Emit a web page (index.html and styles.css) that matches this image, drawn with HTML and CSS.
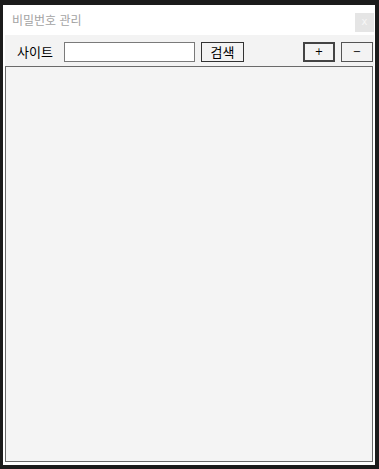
FILE: index.html
```html
<!DOCTYPE html>
<html lang="ko">
<head>
<meta charset="utf-8">
<title>비밀번호 관리</title>
<link rel="stylesheet" href="styles.css">
</head>
<body>
<div class="window">
  <div class="titlebar">
    <span class="title">비밀번호 관리</span>
    <span class="close">x</span>
  </div>
  <div class="content">
    <div class="toolbar">
      <span class="label">사이트</span>
      <input class="search-input" type="text">
      <button class="btn btn-search">검색</button>
      <button class="btn btn-add">+</button>
      <button class="btn btn-remove">−</button>
    </div>
    <div class="listbox"></div>
  </div>
</div>
</body>
</html>
```
FILE: styles.css
```css
html, body {
  margin: 0;
  padding: 0;
  background: #1b1b1b;
  height: 100%;
}
body {
  font-family: "Noto Sans CJK KR", "Noto Sans", sans-serif;
  padding-top: 5px;
  padding-left: 3px;
}
.window {
  width: 372px;
  height: 460px;
  background: #ffffff;
  display: flex;
  flex-direction: column;
}
.titlebar {
  height: 30px;
  display: flex;
  justify-content: space-between;
  align-items: flex-start;
  padding-left: 9px;
  box-sizing: border-box;
}
.title {
  font-size: 12px;
  line-height: 30px;
  color: #a3a3a3;
}
.close {
  margin-top: 8px;
  margin-right: 1px;
  width: 19px;
  height: 19px;
  background: #e5e5e5;
  color: #f7f7f7;
  font-family: "DejaVu Sans", sans-serif;
  font-size: 10px;
  line-height: 18px;
  text-align: center;
}
.content {
  padding-left: 2px;
  padding-right: 1px;
  display: flex;
  flex-direction: column;
}
.toolbar {
  height: 31px;
  background: #f3f3f3;
  display: flex;
  align-items: flex-start;
  padding-top: 7px;
  box-sizing: border-box;
}
.label {
  margin-left: 12px;
  width: 47px;
  font-size: 13px;
  line-height: 20px;
  color: #000;
}
.search-input {
  width: 131px;
  height: 20px;
  box-sizing: border-box;
  border: 1px solid #7a7a7a;
  background: #fff;
  margin: 0;
  padding: 0;
  outline: none;
}
.btn {
  height: 20px;
  box-sizing: border-box;
  background: #f3f3f3;
  margin: 0;
  padding: 0;
  color: #000;
  font-family: "Noto Sans CJK KR", "Noto Sans", sans-serif;
  line-height: 16px;
}
.btn-search {
  margin-left: 6px;
  width: 43px;
  border: 1px solid #333;
  font-size: 13px;
}
.btn-add {
  margin-left: 59px;
  width: 32px;
  border: 2px solid #444;
  font-size: 10px;
  font-family: "DejaVu Sans", sans-serif;
}
.btn-remove {
  margin-left: 6px;
  width: 32px;
  border: 1px solid #555;
  font-size: 10px;
  font-family: "DejaVu Sans", sans-serif;
}
.listbox {
  width: 368px;
  height: 396px;
  box-sizing: border-box;
  border: 1px solid #6a6a6a;
  background: #f4f4f4;
}
```
